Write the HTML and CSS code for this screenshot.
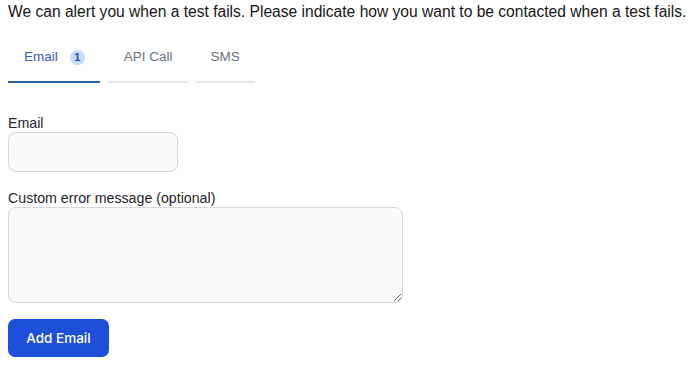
FILE: index.html
```html
<!DOCTYPE html>
<html>
<head>
<meta charset="utf-8">
<link rel="stylesheet" href="styles.css">
</head>
<body>
<p class="intro">We can alert you when a test fails. Please indicate how you want to be contacted when a test fails.</p>
<nav class="tabs">
  <div class="tab active">Email <span class="badge">1</span></div>
  <div class="tab">API Call</div>
  <div class="tab tab-last">SMS</div>
</nav>
<form class="form">
  <label class="label" for="email">Email</label>
  <input class="input" id="email" type="text">
  <label class="label label-spaced" for="msg">Custom error message (optional)</label>
  <textarea class="textarea" id="msg"></textarea>
  <button class="button" type="button">Add Email</button>
</form>
</body>
</html>
```

FILE: styles.css
```css
* { box-sizing: border-box; }
html, body { background: #ffffff; }
body {
  margin: 0;
  padding: 2px 8px 0;
  font-family: "Liberation Sans", Arial, sans-serif;
  color: #111111;
}
.intro {
  margin: 0;
  font-size: 15.6px;
  line-height: 20px;
  color: #161616;
  white-space: nowrap;
}
.tabs {
  display: flex;
  gap: 8px;
  margin-top: 8px;
}
.tab {
  display: flex;
  align-items: center;
  gap: 12px;
  padding: 17px 15px 14px 16px;
  font-size: 13.5px;
  line-height: 20px;
  color: #6b7280;
  border-bottom: 2px solid #e5e7eb;
}
.tab-last { padding-left: 15px; }
.tab.active {
  color: #2f5fb3;
  border-bottom-color: #2f5fb3;
}
.badge {
  display: inline-flex;
  align-items: center;
  justify-content: center;
  width: 15px;
  height: 15px;
  border-radius: 50%;
  background: #c6dafa;
  color: #2752a6;
  font-size: 11px;
  font-weight: bold;
  line-height: 1;
}
.form {
  display: flex;
  flex-direction: column;
  align-items: flex-start;
  margin-top: 31px;
}
.label {
  display: block;
  font-size: 14.2px;
  line-height: 18px;
  color: #1f2328;
}
.label-spaced { margin-top: 17px; }
.input {
  width: 170px;
  height: 40px;
  margin: 0;
  border: 1px solid #d6d8dc;
  border-radius: 8px;
  background: #f9fafb;
  font: inherit;
}
.textarea {
  width: 395px;
  height: 96px;
  margin: 0;
  border: 1px solid #d6d8dc;
  border-radius: 8px;
  background: #f9fafb;
  font: inherit;
}
.button {
  margin-top: 16px;
  width: 101px;
  height: 38px;
  padding: 0;
  border: none;
  border-radius: 7px;
  background: #1d4fd8;
  color: #ffffff;
  font-family: Inter, "Liberation Sans", Arial, sans-serif;
  font-size: 13.5px;
  font-weight: 500;
  white-space: nowrap;
}
```
